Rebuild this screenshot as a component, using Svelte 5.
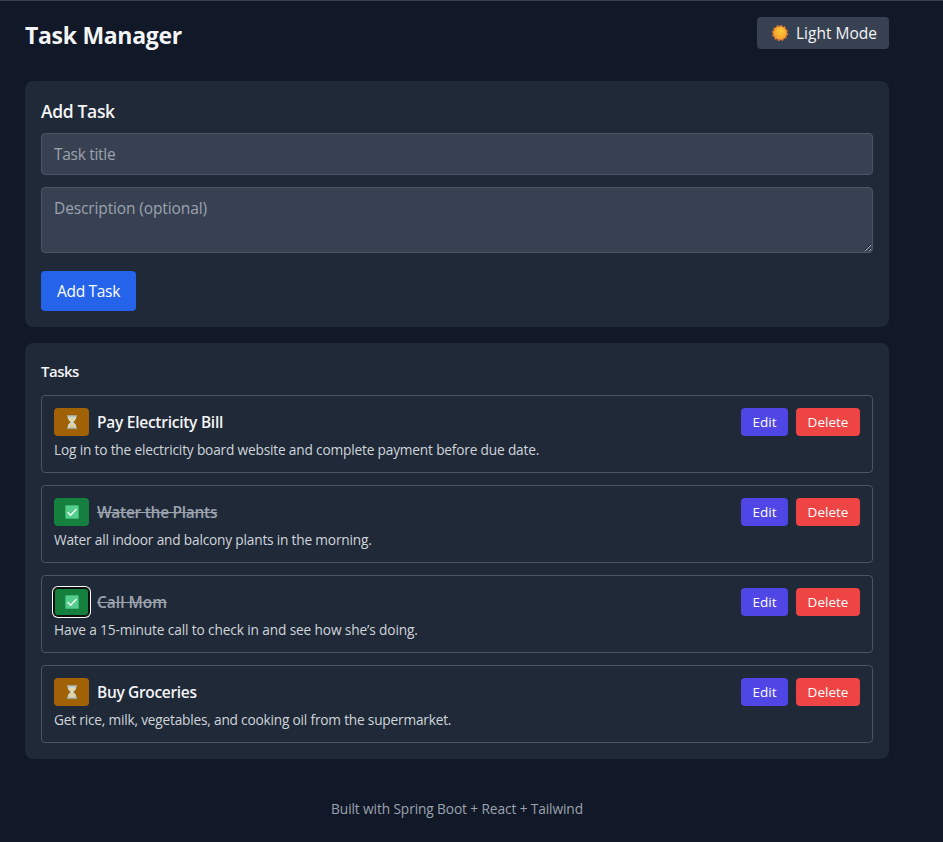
<script>
  const tasks = [
    { title: 'Pay Electricity Bill', titleTracking: -0.26, text: 'Log in to the electricity board website and complete payment before due date.', textTracking: -0.18, done: false },
    { title: 'Water the Plants', titleTracking: -0.28, text: 'Water all indoor and balcony plants in the morning.', textTracking: -0.19, done: true },
    { title: 'Call Mom', titleTracking: 0, text: 'Have a 15-minute call to check in and see how she’s doing.', textTracking: -0.13, done: true, focused: true },
    { title: 'Buy Groceries', titleTracking: -0.33, text: 'Get rice, milk, vegetables, and cooking oil from the supermarket.', textTracking: -0.2, done: false }
  ];
</script>

<div class="page">
  <header>
    <h1>Task Manager</h1>
    <button class="mode">
      <svg width="18" height="18" viewBox="0 0 18 18">
        <defs>
          <radialGradient id="sun" cx=".6" cy=".35" r=".65">
            <stop offset="0" stop-color="#fccb3a" />
            <stop offset="1" stop-color="#f2a02c" />
          </radialGradient>
        </defs>
        <circle cx="9" cy="9" r="7.3" fill="none" stroke="#d9753a" stroke-width="1.6" stroke-dasharray="2.2 1.62" />
        <circle cx="9" cy="9" r="7.1" fill="#e5862f" />
        <circle cx="9" cy="9" r="6.3" fill="url(#sun)" />
      </svg>
      <span>Light Mode</span>
    </button>
  </header>

  <section class="form">
    <h2>Add Task</h2>
    <input placeholder="Task title" />
    <div class="area">
      <textarea placeholder="Description (optional)"></textarea>
      <svg width="8" height="8" viewBox="0 0 8 8">
        <path d="M.5 6.500L6.500 .5M4.500 6.500L6.500 4.500" stroke="#111827" stroke-width=".8" fill="none" />
        <path d="M1 7.200L7.200 1M5 7.200L7.200 5" stroke="#d9dde3" stroke-width=".8" fill="none" />
      </svg>
    </div>
    <button class="add">Add Task</button>
  </section>

  <section class="list">
    <h3>Tasks</h3>
    {#each tasks as task}
      <article>
        <div class="row">
          <button class="badge" class:done={task.done} class:focused={task.focused} aria-label="Toggle status">
            {#if task.done}
              <svg width="14" height="14" viewBox="0 0 14 14">
                <rect x=".3" y=".3" width="13.4" height="13.4" rx=".8" fill="#4fc98a" />
                <rect x="1.2" y="1.2" width="11.6" height="11.6" fill="#55cd8c" />
                <path d="M2.6 7.2L5.6 10.2L11.5 4.1" fill="none" stroke="#f4fff8" stroke-width="1.5" />
              </svg>
            {:else}
              <svg width="14" height="14" viewBox="0 0 14 14">
                <path d="M2.800 1H11.200V3C11.200 5 9 6 8.300 7C9 8 11.200 9 11.200 11V13H2.800V11C2.800 9 5 8 5.700 7C5 6 2.800 5 2.800 3Z" fill="#c9d8d2" />
                <path d="M4 3.200H10C9.600 4.800 8 5.600 7 7C6 5.600 4.400 4.800 4 3.200Z" fill="#f0d79a" />
                <path d="M7 8.200C8 9.500 9.500 10.200 9.800 11.700H4.200C4.500 10.200 6 9.500 7 8.200Z" fill="#efcf88" />
                <path d="M2 1H12M2 13H12" stroke="#a9bab9" stroke-width="1.400" />
              </svg>
            {/if}
          </button>
          <h4 class:struck={task.done} style:letter-spacing="{task.titleTracking}px">{task.title}</h4>
          <button class="edit">Edit</button>
          <button class="delete">Delete</button>
        </div>
        <p style:letter-spacing="{task.textTracking}px">{task.text}</p>
      </article>
    {/each}
  </section>

  <footer>Built with Spring Boot + React + Tailwind</footer>
</div>

<style>
  :global(body) { margin: 0; background: #111827; }
  * { box-sizing: border-box; }
  .page {
    height: 842px;
    padding: 16px 54px 0 25px;
    border-top: 1px solid #3b434d;
    background: #111827;
    color: #f3f4f6;
    font-family: "Open Sans", "Noto Sans", sans-serif;
    font-size: 15.5px;
    overflow: hidden;
  }
  h1, h2, h3, h4, p { margin: 0; white-space: nowrap; }
  button { border: 0; padding: 0; font-family: inherit; color: #fff; border-radius: 4px; display: flex; align-items: center; justify-content: center; white-space: nowrap; }
  header { display: flex; justify-content: space-between; height: 32px; margin-bottom: 32px; }
  h1 { font-size: 23px; line-height: 36px; font-weight: 700; letter-spacing: -0.3px; }
  .mode { width: 132px; height: 32px; background: #374151; color: #f3f4f6; font-size: 15.5px; justify-content: flex-start; padding-left: 14px; gap: 7px; }
  section { background: #1f2937; border-radius: 8px; padding: 16px; }
  .form { height: 246px; margin-bottom: 16px; }
  h2 { font-size: 17.5px; line-height: 29px; font-weight: 600; margin-bottom: 7px; letter-spacing: -0.34px; }
  input, textarea { display: block; width: 100%; border: 1px solid #4b5563; border-radius: 4px; background: #374151; color: #fff; font-family: inherit; font-size: 15.5px; line-height: 24px; padding: 8px 12px; outline: 0; resize: none; }
  input { height: 42px; margin-bottom: 12px; letter-spacing: -0.3px; }
  textarea { height: 66px; overflow: hidden; letter-spacing: -0.12px; }
  input::placeholder, textarea::placeholder { color: #9ca3af; opacity: 1; }
  .area { position: relative; margin-bottom: 18px; }
  .area svg { position: absolute; right: 1px; bottom: 1px; }
  .add { width: 95px; height: 40px; background: #2563eb; font-size: 15.5px; letter-spacing: -0.3px; }
  .list { height: 416px; }
  h3 { font-size: 15px; line-height: 24px; font-weight: 600; margin-bottom: 12px; letter-spacing: -0.5px; }
  article { height: 78px; border: 1px solid #4b5563; border-radius: 4px; padding: 12px; margin-bottom: 12px; }
  .row { display: flex; align-items: center; gap: 8px; height: 28px; margin-bottom: 4px; }
  .badge { width: 35px; height: 28px; background: #a16207; }
  .badge.done { background: #15803d; }
  .badge.focused { box-shadow: inset 0 0 0 1px #101010, 0 0 0 1px #101010, 0 0 0 2px #fff; }
  h4 { flex: 1; font-size: 15.5px; line-height: 24px; font-weight: 600; }
  .struck { color: #9ca3af; text-decoration: line-through; }
  .edit, .delete { height: 28px; font-size: 13.5px; }
  .edit { width: 47px; background: #4f46e5; }
  .delete { width: 64px; background: #ef4444; }
  p { font-size: 13.7px; line-height: 20px; color: #d1d5db; }
  footer { margin-top: 40px; text-align: center; font-size: 13.7px; line-height: 20px; color: #9ca3af; letter-spacing: -0.1px; }
</style>
